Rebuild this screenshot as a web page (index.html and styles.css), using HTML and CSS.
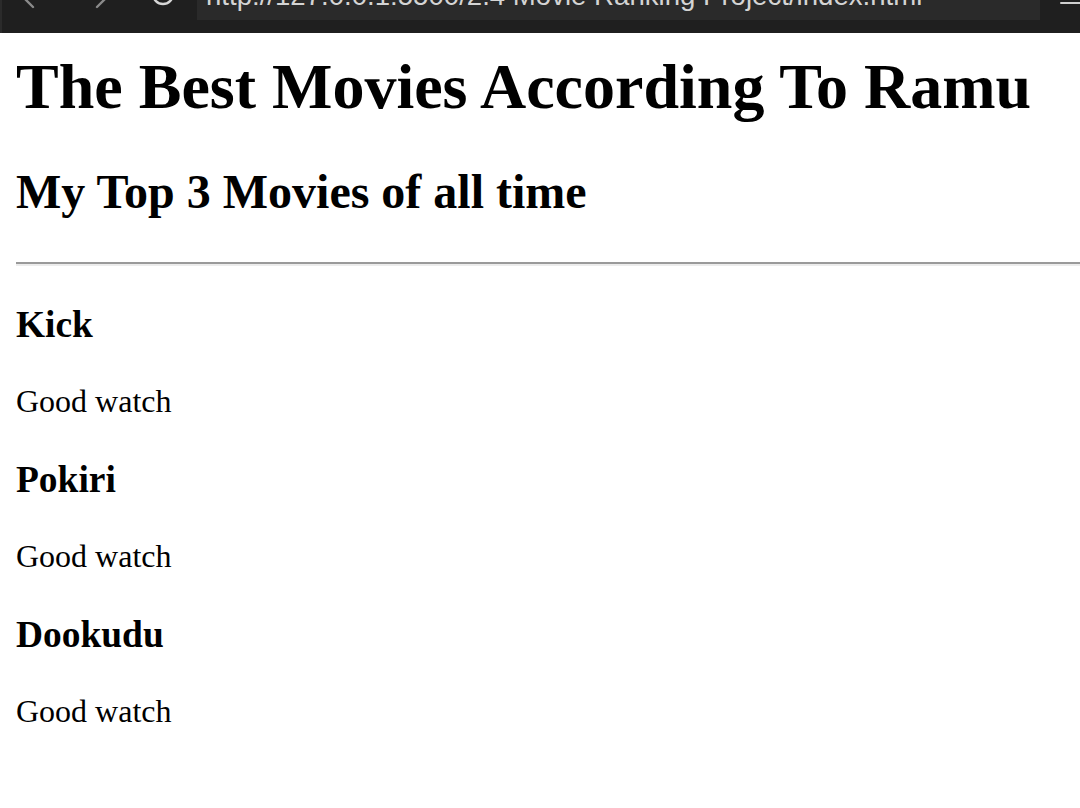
FILE: index.html
```html
<!DOCTYPE html>
<html lang="en">
<head>
<meta charset="utf-8">
<title>The Best Movies According To Ramu</title>
<link rel="stylesheet" href="styles.css">
</head>
<body>
<div class="chrome">
  <svg class="nav" width="197" height="33" viewBox="0 0 197 33">
    <path d="M33 -9 L25 -1 L33 7" fill="none" stroke="#8a8a8a" stroke-width="2.4" stroke-linecap="round" stroke-linejoin="round"/>
    <path d="M97 -9 L105 -1 L97 7" fill="none" stroke="#8a8a8a" stroke-width="2.4" stroke-linecap="round" stroke-linejoin="round"/>
    <circle cx="163" cy="-6" r="10" fill="none" stroke="#d6d6d6" stroke-width="2.4"/>
  </svg>
  <div class="url"><span class="url-text">http://127.0.0.1:5500/2.4 Movie Ranking Project/index.html</span></div>
  <div class="menu"><span class="menu-line"></span></div>
</div>
<main class="page">
  <h1 class="title">The Best Movies According To Ramu</h1>
  <h2 class="subtitle">My Top 3 Movies of all time</h2>
  <hr class="rule">
  <h3 class="movie">Kick</h3>
  <p class="note">Good watch</p>
  <h3 class="movie">Pokiri</h3>
  <p class="note">Good watch</p>
  <h3 class="movie">Dookudu</h3>
  <p class="note">Good watch</p>
</main>
</body>
</html>
```

FILE: styles.css
```css
html, body {
  margin: 0;
  padding: 0;
  background: #ffffff;
}

body {
  font-family: "Liberation Serif", "Times New Roman", serif;
  color: #000;
  overflow: hidden;
}

.chrome {
  display: flex;
  align-items: flex-start;
  height: 33px;
  background: #1f1f1f;
  border-left: 2px solid #2b2b2b;
  box-sizing: border-box;
}

.nav {
  display: block;
  flex: 0 0 auto;
  margin-left: -2px;
}

.url {
  flex: 0 0 843px;
  height: 20px;
  background: #2a2a2a;
  overflow: hidden;
}

.url-text {
  display: block;
  margin: -18px 0 0 9px;
  font-family: "Liberation Sans", Arial, sans-serif;
  font-size: 27.6px;
  line-height: 28px;
  color: #d4d4d4;
  white-space: nowrap;
}

.menu {
  flex: 1 1 auto;
  display: flex;
  justify-content: flex-end;
  padding-top: 2px;
}

.menu-line {
  display: block;
  width: 20px;
  height: 2px;
  background: #cfcfcf;
  border-radius: 1px 0 0 1px;
}

.page {
  padding: 0 0 0 16px;
}

.title {
  font-size: 64px;
  font-weight: bold;
  line-height: normal;
  margin: 17px 0 40px;
}

.subtitle {
  font-size: 48px;
  font-weight: bold;
  line-height: normal;
  margin: 0 0 43px;
}

.rule {
  height: 0;
  margin: 0 0 37px 0;
  border: none;
  border-top: 2px solid #9a9a9a;
  border-bottom: 2px solid #ececec;
}

.movie {
  font-size: 37.44px;
  font-weight: bold;
  line-height: normal;
  margin: 1em 0;
}

.rule + .movie {
  margin-top: 0;
}

.note {
  font-size: 32px;
  line-height: normal;
  margin: 1em 0;
}
```
